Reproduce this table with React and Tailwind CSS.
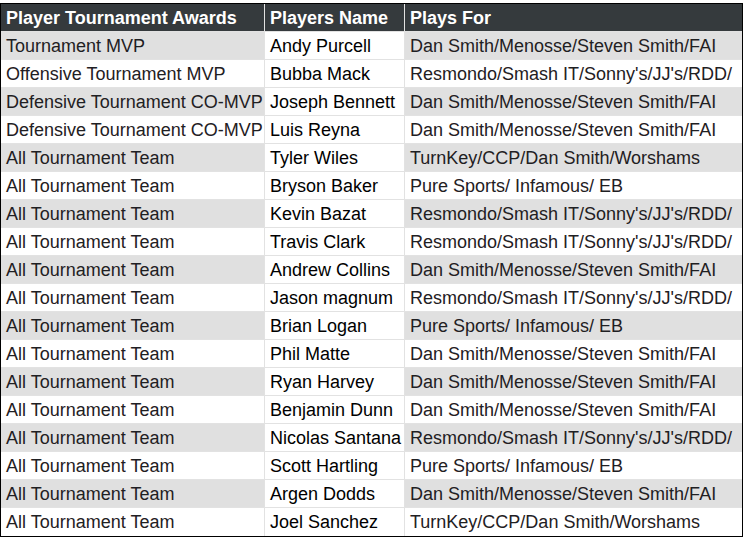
const rows = [
  ['Tournament MVP', 'Andy Purcell', 'Dan Smith/Menosse/Steven Smith/FAI'],
  ['Offensive Tournament MVP', 'Bubba Mack', "Resmondo/Smash IT/Sonny's/JJ's/RDD/"],
  ['Defensive Tournament CO-MVP', 'Joseph Bennett', 'Dan Smith/Menosse/Steven Smith/FAI'],
  ['Defensive Tournament CO-MVP', 'Luis Reyna', 'Dan Smith/Menosse/Steven Smith/FAI'],
  ['All Tournament Team', 'Tyler Wiles', 'TurnKey/CCP/Dan Smith/Worshams'],
  ['All Tournament Team', 'Bryson Baker', 'Pure Sports/ Infamous/ EB'],
  ['All Tournament Team', 'Kevin Bazat', "Resmondo/Smash IT/Sonny's/JJ's/RDD/"],
  ['All Tournament Team', 'Travis Clark', "Resmondo/Smash IT/Sonny's/JJ's/RDD/"],
  ['All Tournament Team', 'Andrew Collins', 'Dan Smith/Menosse/Steven Smith/FAI'],
  ['All Tournament Team', 'Jason magnum', "Resmondo/Smash IT/Sonny's/JJ's/RDD/"],
  ['All Tournament Team', 'Brian Logan', 'Pure Sports/ Infamous/ EB'],
  ['All Tournament Team', 'Phil Matte', 'Dan Smith/Menosse/Steven Smith/FAI'],
  ['All Tournament Team', 'Ryan Harvey', 'Dan Smith/Menosse/Steven Smith/FAI'],
  ['All Tournament Team', 'Benjamin Dunn', 'Dan Smith/Menosse/Steven Smith/FAI'],
  ['All Tournament Team', 'Nicolas Santana', "Resmondo/Smash IT/Sonny's/JJ's/RDD/"],
  ['All Tournament Team', 'Scott Hartling', 'Pure Sports/ Infamous/ EB'],
  ['All Tournament Team', 'Argen Dodds', 'Dan Smith/Menosse/Steven Smith/FAI'],
  ['All Tournament Team', 'Joel Sanchez', 'TurnKey/CCP/Dan Smith/Worshams'],
]

function App() {
  return (
    <div className="w-[746px] h-[540px] bg-white pt-[3px] overflow-hidden" style={{ fontFamily: '"Liberation Sans", Arial, sans-serif' }}>
      <div className="w-[743px] border border-black text-[18px] leading-none">
        <div className="flex h-[28px] bg-[#353a3d] text-white font-bold border-b border-[#e2e2e2]">
          <div className="w-[264px] flex items-center pl-[5px] border-r border-[#e2e2e2] whitespace-nowrap">Player Tournament Awards</div>
          <div className="w-[140px] flex items-center pl-[5px] border-r border-[#e2e2e2] whitespace-nowrap">Players Name</div>
          <div className="flex-1 flex items-center pl-[5px]">Plays For</div>
        </div>
        {rows.map((r, i) => {
          const gray = i % 2 === 0
          return (
            <div key={i} className={`flex h-[28px] text-[#1f2023] ${i < rows.length - 1 ? 'border-b border-[#e2e2e2]' : ''}`}>
              <div className={`w-[264px] flex items-center pl-[5px] border-r border-[#e2e2e2] whitespace-nowrap ${gray ? 'bg-[#e0e0e0]' : 'bg-white'}`}>{r[0]}</div>
              <div className="w-[140px] flex items-center pl-[5px] border-r border-[#e2e2e2] bg-white text-black whitespace-nowrap overflow-hidden">{r[1]}</div>
              <div className={`flex-1 flex items-center pl-[5px] whitespace-nowrap overflow-hidden ${gray ? 'bg-[#e0e0e0]' : 'bg-white'}`}>{r[2]}</div>
            </div>
          )
        })}
      </div>
    </div>
  )
}

export default App
